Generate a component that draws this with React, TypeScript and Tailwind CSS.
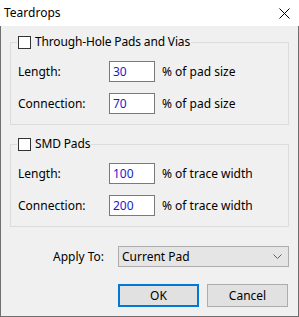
import React from 'react'

const font = { fontFamily: '"Noto Sans", "Open Sans", sans-serif' }

const Field = ({ label, value, unit }: { label: string; value: string; unit: string }) => (
  <div className="flex items-center h-[21px] pl-[7px]">
    <span className="w-[91px] text-[12px] leading-[16px] text-black">{label}</span>
    <div className="w-[46px] h-[21px] border border-[#7a7a7a] bg-white flex items-center pl-[3px] text-[12px] leading-[16px] text-[#1a1acc]">
      {value}
    </div>
    <span className="ml-[7px] text-[12px] leading-[16px] text-black">{unit}</span>
  </div>
)

const Group = ({ title, unit, rows }: { title: string; unit: string; rows: [string, string][] }) => (
  <fieldset className="mx-[9px] border border-[#dcdcdc] px-0 pt-[11px] pb-[10px] flex flex-col gap-[11px]">
    <legend className="ml-[6px] px-[1px] flex items-center h-[16px]">
      <span className="w-[13px] h-[13px] border border-[#333] bg-white" />
      <span className="ml-[4px] text-[12px] leading-[16px] text-black tracking-[-0.15px]">{title}</span>
    </legend>
    {rows.map(([l, v]) => (
      <Field key={l} label={l} value={v} unit={unit} />
    ))}
  </fieldset>
)

export default function App() {
  return (
    <div className="w-[299px] h-[317px] bg-[#f0f0f0] border-x border-b border-[#6e6e6e] flex flex-col" style={font}>
      {/* title bar */}
      <div className="h-[26px] bg-white flex items-center justify-between pl-[4px] pr-[9px] -mx-px">
        <span className="text-[12px] leading-[16px] text-black">Teardrops</span>
        <svg width="11" height="11" viewBox="0 0 11 11">
          <path d="M0.5 0.5 L10.5 10.5 M10.5 0.5 L0.5 10.5" stroke="#000" strokeWidth="1" fill="none" />
        </svg>
      </div>

      <div className="mt-[8px] flex flex-col gap-[11px]">
        <Group
          title="Through-Hole Pads and Vias"
          unit="% of pad size"
          rows={[
            ['Length:', '30'],
            ['Connection:', '70'],
          ]}
        />
        <Group
          title="SMD Pads"
          unit="% of trace width"
          rows={[
            ['Length:', '100'],
            ['Connection:', '200'],
          ]}
        />
      </div>

      <div className="mt-[19px] flex items-center pl-[52px]">
        <span className="w-[65px] text-[12px] leading-[16px] text-black">Apply To:</span>
        <div className="w-[171px] h-[21px] border border-[#adadad] bg-[#e5e5e5] flex items-center justify-between pl-[3px] pr-[6px]">
          <span className="text-[12px] leading-[16px] text-black">Current Pad</span>
          <svg width="9" height="5" viewBox="0 0 9 5">
            <path d="M0.5 0.5 L4.5 4.5 L8.5 0.5" stroke="#606060" strokeWidth="1" fill="none" />
          </svg>
        </div>
      </div>

      <div className="mt-[17px] flex pl-[117px] gap-[8px]">
        <button className="w-[81px] h-[23px] border-2 border-[#0078d7] bg-[#e1e1e1] text-[12px] leading-[16px] text-black">
          OK
        </button>
        <button className="w-[81px] h-[23px] border border-[#adadad] bg-[#e1e1e1] text-[12px] leading-[16px] text-black">
          Cancel
        </button>
      </div>
    </div>
  )
}
